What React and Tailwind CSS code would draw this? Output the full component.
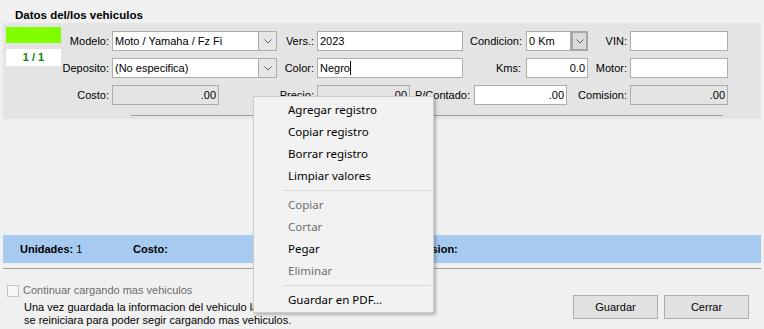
import React from 'react';

const Chevron = () => (
  <svg width="8" height="5" viewBox="0 0 8 5" fill="none">
    <path d="M0.5 0.5 L4 4 L7.5 0.5" stroke="#606060" strokeWidth="1" />
  </svg>
);

function Label({ w, children, pr = 0 }) {
  return (
    <span className={`${w} shrink-0 text-right whitespace-nowrap`} style={{ paddingRight: pr }}>
      {children}
    </span>
  );
}

function Field({ w, ml = 'ml-[3px]', right, disabled, children }) {
  return (
    <div
      className={`${w} ${ml} h-[20px] shrink-0 border border-[#adadad] px-[2px] leading-[18px] whitespace-nowrap overflow-hidden ${
        disabled ? 'bg-[#e4e4e4]' : 'bg-white'
      } ${right ? 'text-right' : ''}`}
    >
      {children}
    </div>
  );
}

function Combo({ w, btn, ml = 'ml-[3px]', strong, children }) {
  return (
    <div className={`${w} ${ml} h-[20px] shrink-0 flex`}>
      <div className="flex-1 border border-[#adadad] bg-white px-[2px] leading-[18px] whitespace-nowrap overflow-hidden">
        {children}
      </div>
      <div
        className={`${btn} h-[20px] flex items-center justify-center ${
          strong ? 'border-2 border-[#a6a6a6] bg-[#dadada]' : 'border border-l-0 border-[#adadad] bg-[#e6e6e6]'
        }`}
      >
        <Chevron />
      </div>
    </div>
  );
}

function MenuItem({ disabled, children }) {
  return (
    <div className={`h-[22px] pl-[34px] flex items-center ${disabled ? 'text-[#6d6d6d]' : 'text-black'}`}>
      {children}
    </div>
  );
}

function Separator() {
  return (
    <div className="h-[7px] flex items-center ml-[29px] mr-[2px]">
      <div className="h-px w-full bg-[#d7d7d7]" />
    </div>
  );
}

export default function App() {
  return (
    <div className="relative w-[764px] h-[329px] overflow-hidden bg-[#f0f0f0] text-[11px] text-black font-['Liberation_Sans',Arial,sans-serif]">
      {/* title */}
      <div className="h-[23px] pt-[8px] pl-[15px] text-[11.5px] leading-[15px] font-bold">Datos del/los vehiculos</div>

      {/* panel */}
      <div className="mx-[3px] h-[96px] bg-[#e4e4e4] flex flex-col pt-[4px]">
        <div className="flex">
          <div className="pl-[3px] w-[58px] shrink-0">
            <div className="h-[16px] bg-[#80ff00]" />
            <div className="mt-[6px] h-[17px] bg-white text-center font-bold text-[#108010] leading-[17px]">1 / 1</div>
          </div>
          <div className="pt-[4px] flex flex-col gap-[7px]">
            <div className="flex items-center h-[20px]">
              <Label w="w-[48px]">Modelo:</Label>
              <Combo w="w-[165px]" btn="w-[18px]">Moto / Yamaha / Fz Fi</Combo>
              <Label w="w-[37px]">Vers.:</Label>
              <Field w="w-[146px]">2023</Field>
              <Label w="w-[62px]" pr={3}>Condicion:</Label>
              <Combo w="w-[62px]" btn="w-[17px]" ml="ml-[1px]" strong>0 Km</Combo>
              <Label w="w-[39px]">VIN:</Label>
              <Field w="w-[98px]" />
            </div>
            <div className="flex items-center h-[20px]">
              <Label w="w-[48px]">Deposito:</Label>
              <Combo w="w-[165px]" btn="w-[18px]">(No especifica)</Combo>
              <Label w="w-[37px]">Color:</Label>
              <Field w="w-[146px]">
                Negro<span className="inline-block align-middle w-px h-[14px] bg-black -mt-[2px]" />
              </Field>
              <Label w="w-[62px]" pr={4}>Kms:</Label>
              <Field w="w-[62px]" ml="ml-[1px]" right>0.0</Field>
              <Label w="w-[39px]">Motor:</Label>
              <Field w="w-[98px]" />
            </div>
            <div className="flex items-center h-[20px]">
              <Label w="w-[48px]">Costo:</Label>
              <Field w="w-[107px]" right disabled>.00</Field>
              <Label w="w-[95px]">Precio:</Label>
              <Field w="w-[93px]" right disabled>.00</Field>
              <Label w="w-[62px]" pr={2}>P/Contado:</Label>
              <Field w="w-[93px]" ml="ml-[2px]" right>.00</Field>
              <Label w="w-[60px]">Comision:</Label>
              <Field w="w-[98px]" right disabled>.00</Field>
            </div>
          </div>
        </div>
        <div className="mt-[10px] ml-[128px] w-[592px] h-px bg-[#a0a0a0]" />
      </div>

      {/* status bar */}
      <div className="mt-[116px] mx-[3px] h-[28px] bg-[#a6caf0] flex items-center pl-[17px] font-bold">
        <span className="w-[113px] shrink-0">
          Unidades: <span className="font-normal">1</span>
        </span>
        <span className="w-[271px] shrink-0">Costo:</span>
        <span>Comision:</span>
      </div>
      <div className="mt-[5px] mx-[3px] h-px bg-[#a0a0a0]" />

      {/* bottom */}
      <div className="flex justify-between">
        <div className="pt-[15px]">
          <div className="flex items-center h-[13px] ml-[7px]">
            <div className="w-[12px] h-[12px] border border-[#c4c4c4] bg-[#f7f7f7]" />
            <span className="ml-[4px] text-[#6d6d6d]">Continuar cargando mas vehiculos</span>
          </div>
          <div className="mt-[4px] ml-[24px] leading-[13px]">
            <div>Una vez guardada la informacion del vehiculo la pantalla</div>
            <div>se reiniciara para poder segir cargando mas vehiculos.</div>
          </div>
        </div>
        <div className="pt-[26px] pr-[15px] flex gap-[6px]">
          <button className="w-[85px] h-[24px] border border-[#adadad] bg-[#e1e1e1]">Guardar</button>
          <button className="w-[85px] h-[24px] border border-[#adadad] bg-[#e1e1e1]">Cerrar</button>
        </div>
      </div>

      {/* context menu */}
      <div className="absolute left-[253px] top-[96px] w-[181px] h-[217px] bg-[#f2f2f2] border border-[#cccccc] shadow-[2px_2px_3px_rgba(0,0,0,0.25)] pt-[2px] text-[11.5px] font-['Noto_Sans',sans-serif]">
        <MenuItem>Agregar registro</MenuItem>
        <MenuItem>Copiar registro</MenuItem>
        <MenuItem>Borrar registro</MenuItem>
        <MenuItem>Limpiar valores</MenuItem>
        <Separator />
        <MenuItem disabled>Copiar</MenuItem>
        <MenuItem disabled>Cortar</MenuItem>
        <MenuItem>Pegar</MenuItem>
        <MenuItem disabled>Eliminar</MenuItem>
        <Separator />
        <MenuItem>Guardar en PDF...</MenuItem>
      </div>
    </div>
  );
}
